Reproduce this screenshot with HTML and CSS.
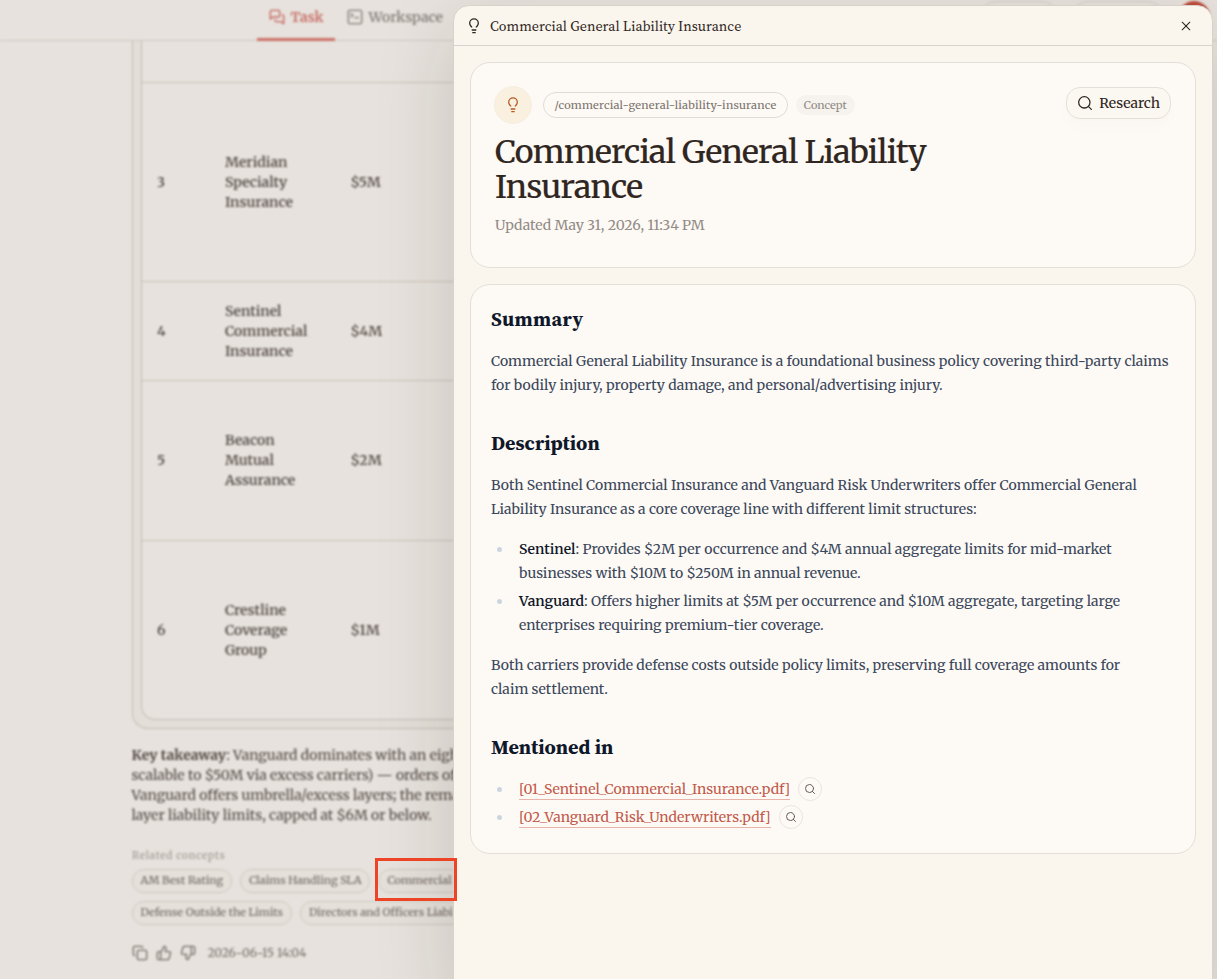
FILE: index.html
```
<!DOCTYPE html>
<html lang="en">
<head>
<meta charset="utf-8">
<title>Commercial General Liability Insurance</title>
<link rel="stylesheet" href="styles.css">
</head>
<body>
<div class="app">
  <header class="topbar">
    <nav class="tabs">
      <a class="tab tab-active"><svg class="ic" viewBox="0 0 24 24"><path d="M2 4a2 2 0 0 1 2-2h10a2 2 0 0 1 2 2v6a2 2 0 0 1-2 2H6l-4 3z"/><path d="M20 9a2 2 0 0 1 2 2v11l-4-3h-7a2 2 0 0 1-2-2v-1"/></svg><span>Task</span></a>
      <a class="tab"><svg class="ic" viewBox="0 0 24 24"><rect x="2" y="2" width="20" height="20" rx="2"/><path d="m6 7 3 2.500L6 12M12 13h5"/></svg><span>Workspace</span></a>
    </nav>
    <div class="actions"><span class="action"></span><span class="action action-wide"></span><span class="avatar"></span></div>
  </header>
  <main class="thread">
    <div class="table-shell">
      <div class="table">
        <div class="row row-first"></div>
        <div class="row row-3"><span>3</span><span>Meridian<br>Specialty<br>Insurance</span><span>$5M</span></div>
        <div class="row row-4"><span>4</span><span>Sentinel<br>Commercial<br>Insurance</span><span>$4M</span></div>
        <div class="row row-5"><span>5</span><span>Beacon<br>Mutual<br>Assurance</span><span>$2M</span></div>
        <div class="row row-6"><span>6</span><span>Crestline<br>Coverage<br>Group</span><span>$1M</span></div>
      </div>
    </div>
    <p class="takeaway"><strong>Key takeaway</strong>: Vanguard dominates with an eigh<br>scalable to $50M via excess carriers) — orders of<br>Vanguard offers umbrella/excess layers; the rema<br>layer liability limits, capped at $6M or below.</p>
    <div class="related">Related concepts</div>
    <div class="chips"><span class="chip">AM Best Rating</span><span class="chip">Claims Handling SLA</span><span class="chip chip-wide">Commercial</span></div>
    <div class="chips"><span class="chip">Defense Outside the Limits</span><span class="chip chip-wide">Directors and Officers Liabi</span></div>
    <div class="feedback">
      <svg class="ic" viewBox="0 0 24 24"><rect x="8" y="8" width="14" height="14" rx="2"/><path d="M4 16a2 2 0 0 1-2-2V4c0-1.100.9-2 2-2h10a2 2 0 0 1 2 2"/></svg>
      <svg class="ic" viewBox="0 0 24 24"><path d="M7 10v12M15 5.880 14 10h5.830a2 2 0 0 1 1.920 2.560l-2.330 8A2 2 0 0 1 17.500 22H4a2 2 0 0 1-2-2v-8a2 2 0 0 1 2-2h2.760a2 2 0 0 0 1.790-1.110L12 2a3.130 3.130 0 0 1 3 3.880Z"/></svg>
      <svg class="ic" viewBox="0 0 24 24"><path d="M17 14V2M9 18.120 10 14H4.170a2 2 0 0 1-1.920-2.560l2.330-8A2 2 0 0 1 6.500 2H20a2 2 0 0 1 2 2v8a2 2 0 0 1-2 2h-2.760a2 2 0 0 0-1.790 1.110L12 22a3.130 3.130 0 0 1-3-3.880Z"/></svg>
      <span>2026-06-15 14:04</span>
    </div>
  </main>
</div>

<aside class="drawer">
  <header class="drawer-head">
    <svg class="bulb" viewBox="0 0 16 16"><path d="M5.800 9.500C5.600 8.300 3.700 7.700 3.700 5.200a4.300 4.300 0 0 1 8.600 0c0 2.500-1.900 3.100-2.100 4.300"/><path d="M5.700 12h4.600M6.300 14.700h3.400"/></svg>
    <span class="drawer-title">Commercial General Liability Insurance</span>
    <svg class="close" viewBox="0 0 24 24"><path d="M19 5 5 19M5 5l14 14"/></svg>
  </header>
  <section class="card hero">
    <div class="hero-main">
      <div class="meta">
        <span class="badge"><svg class="bulb" viewBox="0 0 16 16"><path d="M5.800 9.500C5.600 8.300 3.700 7.700 3.700 5.200a4.300 4.300 0 0 1 8.600 0c0 2.500-1.900 3.100-2.100 4.300"/><path d="M5.700 12h4.600M6.300 14.700h3.400"/></svg></span>
        <span class="slug">/commercial-general-liability-insurance</span>
        <span class="kind">Concept</span>
      </div>
      <h1>Commercial General Liability<br>Insurance</h1>
      <div class="updated">Updated May 31, 2026, 11:34 PM</div>
    </div>
    <button class="research"><svg class="ic" viewBox="0 0 24 24"><circle cx="11" cy="11" r="8.500"/><path d="m21.500 21.500-4.500-4.500"/></svg><span>Research</span></button>
  </section>
  <section class="card body">
    <h2 class="lead">Summary</h2>
    <p>Commercial General Liability Insurance is a foundational business policy covering third-party claims<br>for bodily injury, property damage, and personal/advertising injury.</p>
    <h2>Description</h2>
    <p>Both Sentinel Commercial Insurance and Vanguard Risk Underwriters offer Commercial General<br>Liability Insurance as a core coverage line with different limit structures:</p>
    <ul>
      <li><strong>Sentinel</strong>: Provides $2M per occurrence and $4M annual aggregate limits for mid-market<br>businesses with $10M to $250M in annual revenue.</li>
      <li><strong>Vanguard</strong>: Offers higher limits at $5M per occurrence and $10M aggregate, targeting large<br>enterprises requiring premium-tier coverage.</li>
    </ul>
    <p>Both carriers provide defense costs outside policy limits, preserving full coverage amounts for<br>claim settlement.</p>
    <h2>Mentioned in</h2>
    <ul>
      <li class="source"><a>[01_Sentinel_Commercial_Insurance.pdf]</a><span class="lookup"><svg class="ic" viewBox="0 0 24 24"><circle cx="11" cy="11" r="8"/><path d="m21 21-4.300-4.300"/></svg></span></li>
      <li class="source"><a>[02_Vanguard_Risk_Underwriters.pdf]</a><span class="lookup"><svg class="ic" viewBox="0 0 24 24"><circle cx="11" cy="11" r="8"/><path d="m21 21-4.300-4.300"/></svg></span></li>
    </ul>
  </section>
</aside>
<div class="highlight"></div>
</body>
</html>
```
FILE: styles.css
```
* { box-sizing: border-box; }
body {
  margin: 0;
  width: 1217px;
  height: 979px;
  overflow: hidden;
  position: relative;
  background: #e7e2dd;
  color: #2f2521;
  font-family: Merriweather, "DejaVu Serif Condensed", "DejaVu Serif", serif;
}
svg { display: block; flex: none; fill: none; stroke: currentColor; stroke-width: 2; stroke-linecap: round; stroke-linejoin: round; }
.ic { width: 16px; height: 16px; }

/* Page behind the drawer */
.app { height: 979px; filter: blur(0.8px); font-size: 14px; color: #504743; white-space: nowrap; }
.topbar { height: 41px; display: flex; justify-content: space-between; padding: 0 5px 0 257px; border-bottom: 1px solid #cdc8c2; }
.tabs { display: flex; }
.tab { height: 41px; display: flex; align-items: flex-start; gap: 6px; padding: 7px 12px 0 12px; font-size: 14px; line-height: 20px; color: #857e79; font-weight: 600; }
.tab .ic { margin-top: 2px; }
.tab-active { padding-left: 11.500px; padding-right: 11px; color: #c4645c; border-bottom: 3px solid #cb7168; }
.actions { display: flex; gap: 14px; padding-top: 1px; }
.action { width: 78px; height: 32px; border: 1px solid #d0cbc4; border-radius: 16px; }
.action-wide { width: 92px; }
.avatar { width: 32px; height: 32px; margin-right: 2px; border-radius: 50%; background: #bd4c3c; }

.thread { padding-left: 132px; }
.table-shell { width: 900px; height: 688px; padding: 0 8px 8px; border: 1px solid #c2bcb5; border-top: 0; border-radius: 0 0 16px 16px; background: #e3dfd8; }
.table { height: 679px; border: 1px solid #c2bcb5; border-top: 0; border-radius: 0 0 14px 14px; background: #e7e2dd; }
.row { display: grid; grid-template-columns: 68px 125.500px 1fr; align-items: center; padding-left: 15px; border-bottom: 1px solid #c9c1b6; line-height: 20px; font-weight: 600; }
.row-first { height: 42px; }
.row-3 { height: 199px; }
.row-4 { height: 99px; }
.row-5 { height: 160px; padding-bottom: 1px; }
.row-6 { height: 178px; border-bottom: 0; }
.related { margin-top: 23px; font-size: 10px; line-height: 16px; letter-spacing: 0.8px; color: #9c948f; }
.chips { display: flex; gap: 8px; margin: 5px 0 8px -0.500px; }
.chips + .chips { margin: 0 0 0 -0.500px; }
.chip { height: 24px; padding: 0 8px; border: 1px solid #cdc7bf; border-radius: 12px; background: #e5e0da; font-size: 11px; line-height: 21px; color: #6d645f; }
.chip-wide { width: 180px; }
.feedback { display: flex; align-items: center; gap: 8px; margin-top: 19px; height: 18px; color: #78706b; font-size: 12px; line-height: 16px; }
.feedback span { margin: 0 0 0 3.500px; }

/* Concept drawer */
.drawer { position: absolute; left: 453px; top: 5px; width: 760px; height: 990px; border: 1px solid #d8d2ca; border-radius: 16px; background: #faf6ee; box-shadow: 0 24px 80px rgba(40, 25, 20, 0.15); white-space: nowrap; }
.drawer-head { height: 40px; display: flex; align-items: center; padding: 0 19px 0 12px; border-bottom: 1px solid #d8d3cc; }
.bulb { width: 16px; height: 16px; stroke-width: 1.300; stroke-linecap: butt; }
.drawer-title { margin-left: 8px; flex: 1; font-family: "Source Serif 4", Merriweather, serif; font-size: 14px; }
.close { width: 14px; height: 14px; padding: 0.500px; }
.card { margin: 16px 16px 0; border: 1px solid #e3dfd9; border-radius: 20px; background: #fdfaf5; }
.hero { height: 206px; display: flex; justify-content: space-between; align-items: flex-start; padding: 23px 24px; }
.meta { display: flex; align-items: center; margin-left: -1px; }
.badge { width: 38px; height: 38px; display: grid; place-items: center; border-radius: 50%; background: #faf0df; border: 1px solid #f5eee2; color: #b45a26; }
.slug { height: 26px; margin-left: 11px; padding: 0 10.500px; border: 1px solid #e0dbd4; border-radius: 13px; font-size: 11px; letter-spacing: 0.220px; line-height: 24px; color: #7c736d; }
.kind { height: 20px; margin-left: 8px; padding: 0 8px; border-radius: 10px; background: #f6f3ee; font-size: 11px; line-height: 20px; color: #918a85; }
h1 { margin: 11px 0 0; font-size: 32px; line-height: 35px; font-weight: 400; letter-spacing: -0.640px; -webkit-text-stroke: 0.200px; }
.updated { margin-top: 9px; font-size: 14px; line-height: 22px; color: #938b86; }
.research { height: 32px; display: flex; align-items: center; gap: 6px; margin-top: 1px; padding: 0 10px; border: 1px solid #e5dfda; border-radius: 14px; background: #fbf8f2; box-shadow: 0 8px 16px rgba(60, 40, 30, 0.015); color: #2f2521; font-family: inherit; font-size: 14px; }
.research .ic { stroke-width: 1.900; }
.body { height: 570px; padding: 20px; font-size: 14px; line-height: 24px; color: #3b475b; }
h2 { margin: 32px 0 16px; font-family: "Source Serif 4", Merriweather, serif; font-size: 20px; line-height: 28px; font-weight: 750; color: #0f172a; }
.lead { margin-top: 0; letter-spacing: 0.400px; }
p, ul { margin: 16px 0; }
.takeaway { margin: 16px 0 0 -0.500px; line-height: 20px; }
ul { list-style: none; padding: 0; }
li { position: relative; padding-left: 28px; margin-bottom: 4px; }
li::before { content: ""; position: absolute; left: 6px; top: 10px; width: 5px; height: 5px; border-radius: 50%; background: #cbd5e1; }
li strong { font-weight: 600; color: #0f172a; }
.source { display: flex; height: 24px; align-items: center; gap: 8px; }
.source a { line-height: 20px; border-bottom: 1px solid #e8b4aa; color: #c25a4b; letter-spacing: -0.010px; }
.lookup { width: 24px; height: 24px; display: grid; place-items: center; border: 1px solid #e9e5df; border-radius: 50%; color: #655d59; }
.lookup .ic { width: 12px; height: 12px; }

.highlight { position: absolute; left: 375px; top: 858px; width: 82px; height: 43px; border: 3px solid #ed4426; }
```
